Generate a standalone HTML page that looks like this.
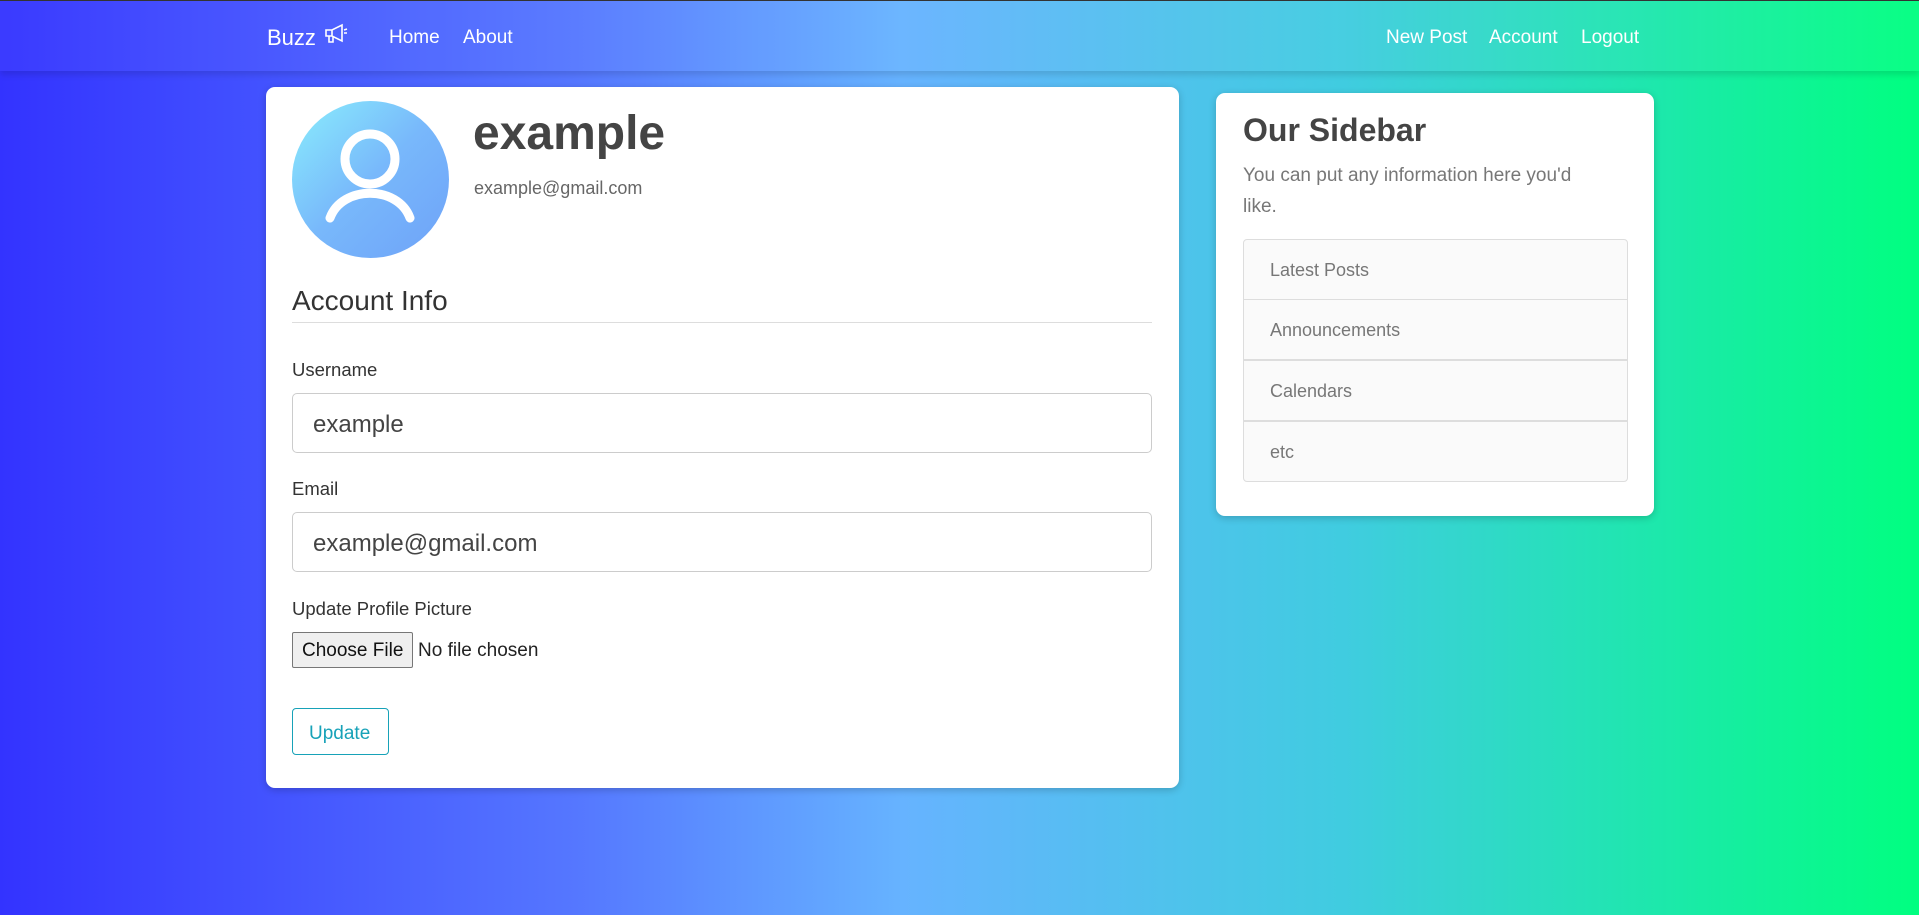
<!DOCTYPE html>
<html><head><meta charset="utf-8"><style>
*{box-sizing:border-box;margin:0;padding:0}
html,body{width:1919px;height:915px;overflow:hidden}
body{font-family:"Liberation Sans",sans-serif;background:linear-gradient(90deg,#3333ff 0%,#5577ff 30%,#66b3ff 47%,#40cce0 70%,#00ff80 100%);position:relative;color:#444}
.nav{position:absolute;left:0;top:0;width:1919px;height:71px;border-top:1px solid #333;background:rgba(255,255,255,.04);box-shadow:0 4px 6px rgba(0,0,0,.12)}
.nav span{position:absolute;top:26px;color:#fff;font-size:19px}
.card{position:absolute;background:#fff;border-radius:9px;box-shadow:0 2px 8px rgba(0,0,0,.2)}
.lbl{position:absolute;left:292px;font-size:18.5px;color:#333}
.inp{position:absolute;left:292px;width:860px;height:60px;border:1px solid #ccc;border-radius:5px;font-size:24px;padding:17px 20px;color:#444;background:#fff}
.li{position:absolute;left:1243px;width:385px;height:61px;border:1px solid #ddd;background:#fafafa;font-size:18px;color:#777;padding:20px 26px}
</style></head><body>
<div class="nav">
<span style="left:267px;font-size:22px;top:24px">Buzz</span>
<svg style="position:absolute;left:324px;top:22px" width="24" height="22" viewBox="0 0 24 22" fill="none" stroke="#fff" stroke-width="1.6"><path d="M2 7h6l10-5v16L8 13H2z M5 13v6h4v-6 M8 7v6 M20 7l3-1 M20 10h3"/></svg>
<span style="left:389px">Home</span><span style="left:463px">About</span>
<span style="left:1386px">New Post</span><span style="left:1489px">Account</span><span style="left:1581px">Logout</span>
</div>
<div class="card" style="left:266px;top:87px;width:913px;height:701px"></div>
<svg style="position:absolute;left:292px;top:101px" width="157" height="157" viewBox="0 0 157 157"><defs><linearGradient id="g" x1="0" y1="0" x2="1" y2="1"><stop offset="0" stop-color="#8aeefc"/><stop offset=".5" stop-color="#78b8fb"/><stop offset="1" stop-color="#6ea2f8"/></linearGradient></defs><circle cx="78.5" cy="78.5" r="78.5" fill="url(#g)"/><g fill="none" stroke="#fff" stroke-width="9" stroke-linecap="round"><circle cx="78" cy="58" r="25"/><path d="M38 117C50 84 106 84 118 117"/></g></svg>
<div style="position:absolute;left:473px;top:106px;font-size:48px;font-weight:bold;color:#444">example</div>
<div style="position:absolute;left:474px;top:178px;font-size:18px;color:#666">example@gmail.com</div>
<div style="position:absolute;left:292px;top:285px;font-size:28px;color:#333">Account Info</div>
<div style="position:absolute;left:292px;top:322px;width:860px;height:1px;background:#ddd"></div>
<div class="lbl" style="top:359px">Username</div>
<div class="inp" style="top:393px">example</div>
<div class="lbl" style="top:478px">Email</div>
<div class="inp" style="top:512px">example@gmail.com</div>
<div class="lbl" style="top:598px">Update Profile Picture</div>
<div style="position:absolute;left:292px;top:632px;width:121px;height:36px;border:1px solid #777;border-radius:2px;background:#efefef;font-size:19px;color:#111;padding:7px 0 0 9px">Choose File</div>
<div style="position:absolute;left:418px;top:640px;font-size:19px;color:#222">No file chosen</div>
<div style="position:absolute;left:292px;top:708px;width:97px;height:47px;border:1px solid #17a2b8;border-radius:4px;color:#17a2b8;font-size:19px;padding:14px 0 0 16px">Update</div>
<div class="card" style="left:1216px;top:93px;width:438px;height:423px"></div>
<div style="position:absolute;left:1243px;top:112px;font-size:32px;font-weight:bold;color:#444">Our Sidebar</div>
<div style="position:absolute;left:1243px;top:160px;width:345px;font-size:19px;line-height:31px;color:#777">You can put any information here you'd like.</div>
<div class="li" style="top:239px;border-radius:4px 4px 0 0">Latest Posts</div>
<div class="li" style="top:299px">Announcements</div>
<div class="li" style="top:360px">Calendars</div>
<div class="li" style="top:421px;border-radius:0 0 4px 4px">etc</div>
</body></html>
